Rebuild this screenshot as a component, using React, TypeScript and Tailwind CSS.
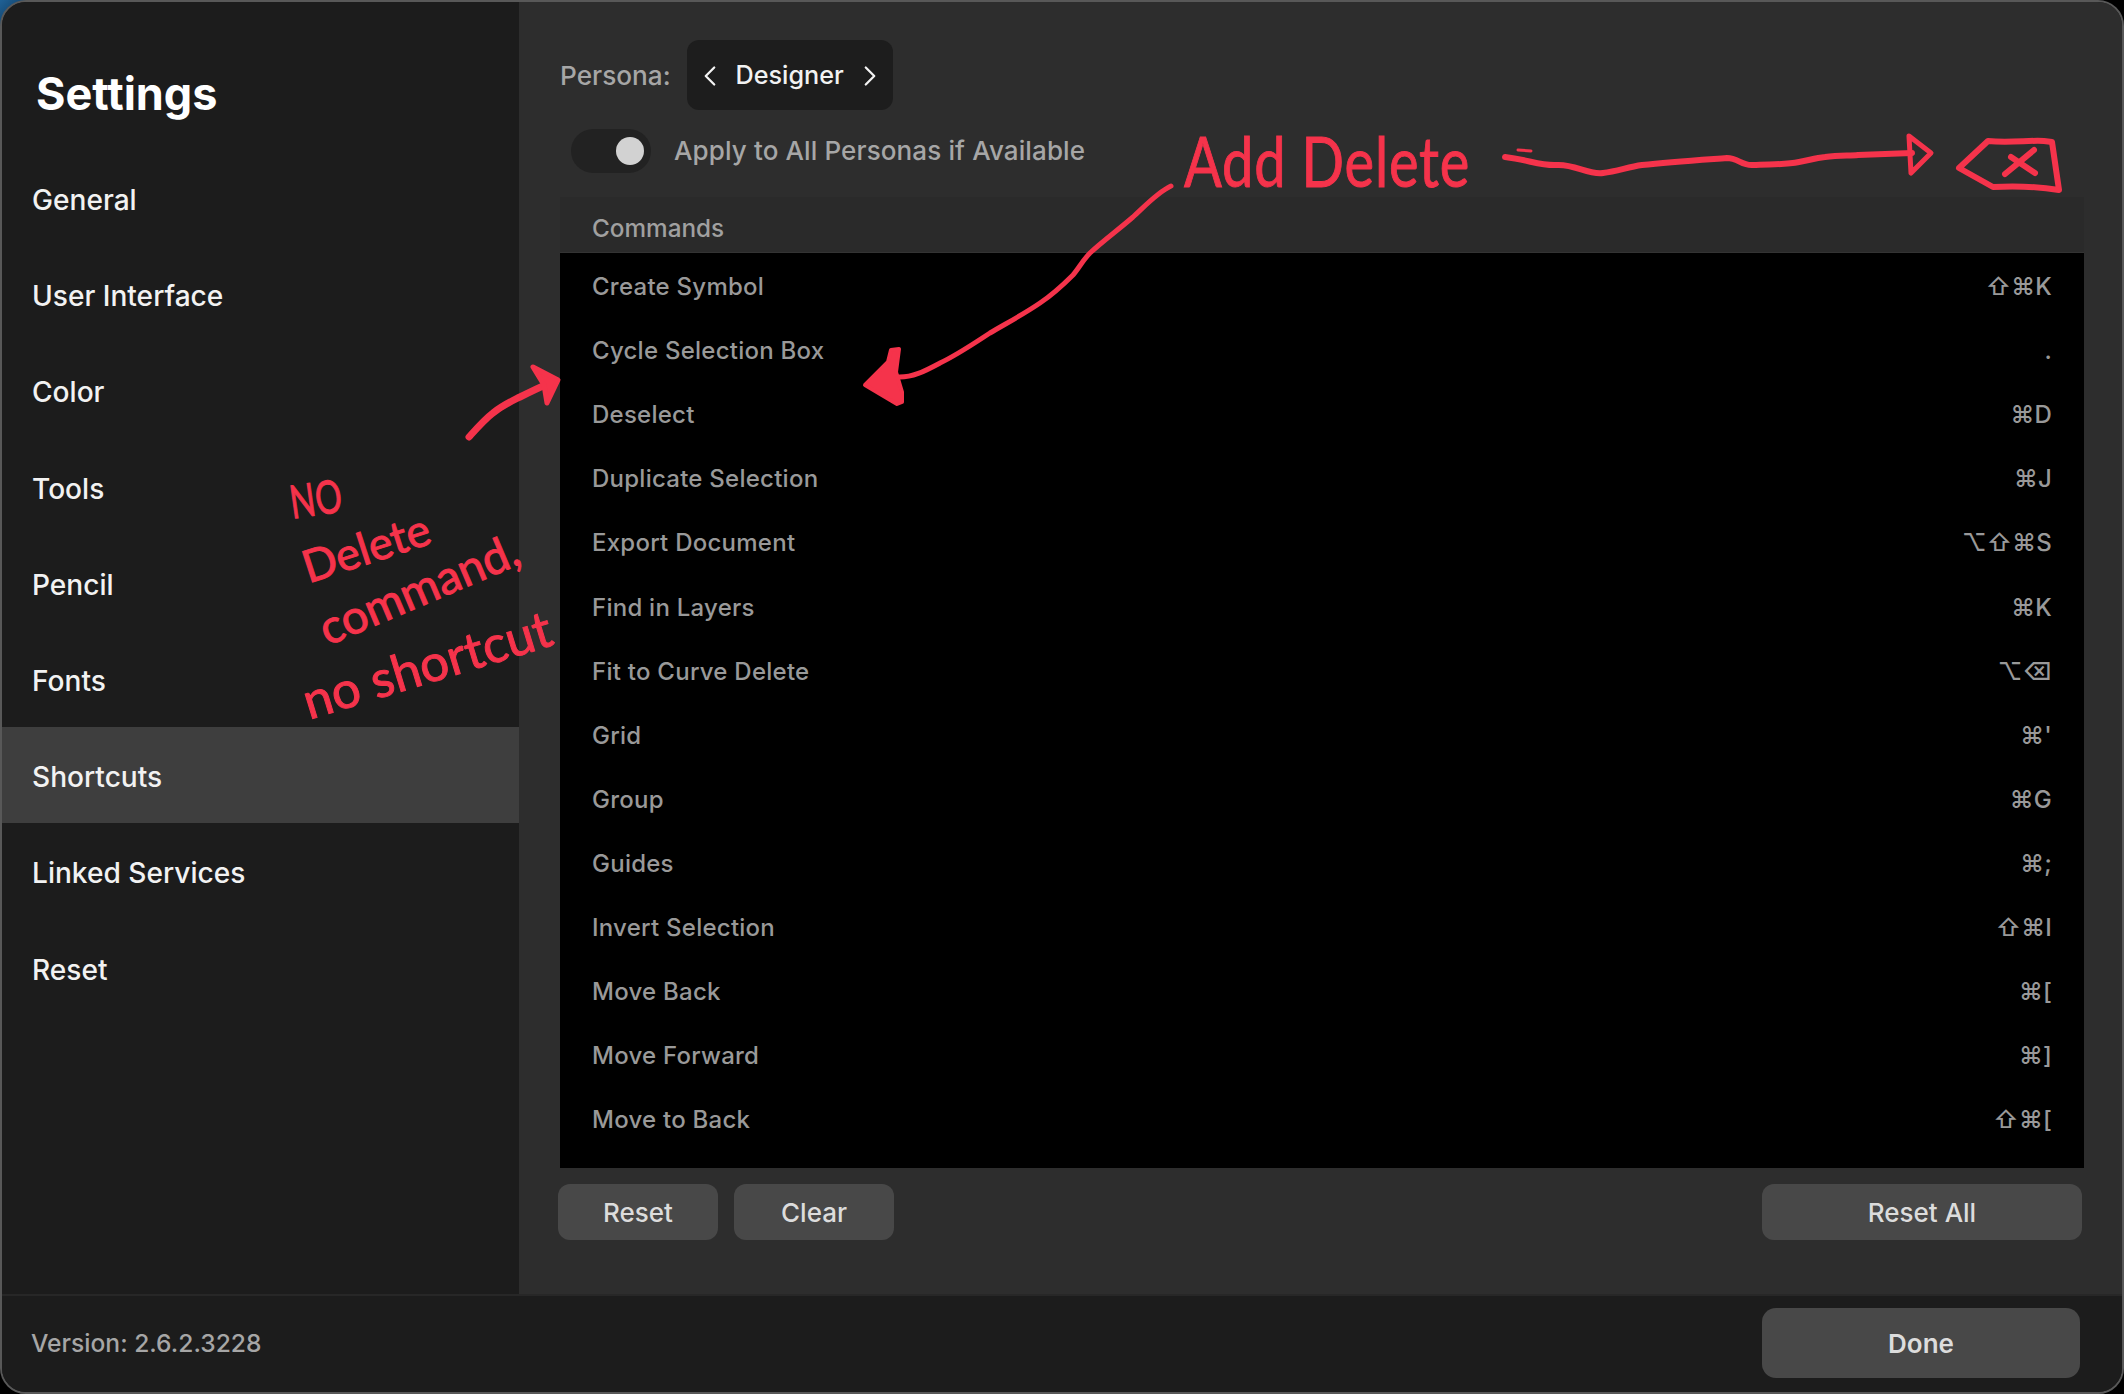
import { ChevronLeft, ChevronRight } from "lucide-react";

const sections = [
  "General",
  "User Interface",
  "Color",
  "Tools",
  "Pencil",
  "Fonts",
  "Shortcuts",
  "Linked Services",
  "Reset",
];

const commands = [
  ["Create Symbol", "⇧⌘K"],
  ["Cycle Selection Box", "."],
  ["Deselect", "⌘D"],
  ["Duplicate Selection", "⌘J"],
  ["Export Document", "⌥⇧⌘S"],
  ["Find in Layers", "⌘K"],
  ["Fit to Curve Delete", "⌥⌫"],
  ["Grid", "⌘'"],
  ["Group", "⌘G"],
  ["Guides", "⌘;"],
  ["Invert Selection", "⇧⌘I"],
  ["Move Back", "⌘["],
  ["Move Forward", "⌘]"],
  ["Move to Back", "⇧⌘["],
];

function Scribbles() {
  return (
    <svg
      className="absolute inset-0 pointer-events-none"
      width={2124}
      height={1394}
      viewBox="0 0 2124 1394"
      fill="none"
      stroke="#f5334b"
      strokeWidth={6}
      strokeLinecap="round"
      strokeLinejoin="round"
    >
      {/* wavy arrow to the delete key */}
      <path d="M1505 157C1530 160 1540 166 1557 165C1575 164 1588 175 1603 173C1618 171 1628 167 1642 165C1670 162 1700 160 1727 158C1738 158 1742 166 1753 165C1770 164 1785 165 1799 162C1810 160 1815 158 1825 157C1840 155 1850 156 1858 155L1912 153" />
      <path d="M1518 150L1531 151" strokeWidth={3} />
      <path d="M1909 136L1931 153L1911 173Z" strokeWidth={5} />
      {/* hand drawn delete key */}
      <path d="M1988 141C2010 143 2030 140 2044 141L2052 142L2059 190C2035 186 2015 186 1993 187L1959 168L1988 141Z" />
      <path d="M2034 150L2005 174M2011 157L2035 173" />
      {/* arrow to the list */}
      <path d="M1171 186C1158 192 1146 205 1133 217C1118 230 1103 241 1090 253C1083 260 1079 268 1073 275C1062 286 1052 295 1040 303C1024 314 1007 323 990 333C973 344 957 355 940 363C925 371 912 378 897 377" strokeWidth={5} />
      <path d="M865 385L888 362L891 350L899 349L896 372L902 392L902 402L897 404Z" fill="#f5334b" strokeWidth={4} />
      {/* small arrow from the note */}
      <path d="M469 437C478 427 485 419 493 413C503 405 512 401 520 397C530 392 538 388 552 382" strokeWidth={7} />
      <path d="M533 367L558 380L547 403L544 385Z" fill="#f5334b" strokeWidth={5} />
    </svg>
  );
}

function Notes() {
  const note =
    "absolute whitespace-nowrap text-[#f5334b] [font-family:Lato,sans-serif] [-webkit-text-stroke:1px_#f5334b]";
  return (
    <>
      <span className={`${note} left-[1184px] top-[116px] text-[70px] leading-[88px] tracking-[1px] scale-x-[0.8] origin-left`}>
        Add Delete
      </span>
      <span className={`${note} left-[290px] top-[477px] text-[46px] leading-[50px] -rotate-[8deg] scale-x-[0.72] origin-left`}>
        NO
      </span>
      <span className={`${note} left-[300px] top-[519px] text-[45px] leading-[56px] -rotate-[18deg]`}>
        Delete
      </span>
      <span className={`${note} left-[312px] top-[558px] text-[47px] leading-[60px] -rotate-[23deg]`}>
        command,
      </span>
      <span className={`${note} left-[298px] top-[634px] text-[51px] leading-[60px] -rotate-[17deg]`}>
        no shortcut
      </span>
    </>
  );
}

export default function App() {
  return (
    <div className="relative h-[1394px] w-[2124px] overflow-hidden bg-[linear-gradient(135deg,#1f6196_0,#0f3a5e_28px,#000000_30px)] [font-family:Inter,'DejaVu_Sans',sans-serif]">
      <div className="flex h-full flex-col overflow-hidden rounded-[26px] border-2 border-[#585858] bg-[#1c1c1c]">
        <div className="flex min-h-0 flex-1">
          <aside className="w-[517px] shrink-0 bg-[#1c1c1c]">
            <h1 className="mt-[62px] mb-[26px] pl-[34px] text-[45px] leading-[60px] font-bold text-white">
              Settings
            </h1>
            <nav>
              {sections.map((name) => (
                <div
                  key={name}
                  className={`flex h-[96.2px] items-center pt-[4px] pl-[30px] text-[28.1px] font-medium text-[#f2f2f2] ${
                    name === "Shortcuts" ? "bg-[#3e3e3e]" : ""
                  }`}
                >
                  {name}
                </div>
              ))}
            </nav>
          </aside>

          <main className="min-w-0 flex-1 bg-[#2d2d2d] pt-[38px] pr-[38px] pl-[41px]">
            <div className="flex h-[70px] items-center gap-[16px]">
              <span className="pt-[2px] text-[26.2px] font-medium text-[#a6a6a6]">
                Persona:
              </span>
              <div className="flex h-[70px] w-[206px] items-center justify-center gap-[9px] rounded-[12px] bg-[#1d1d1d] pt-[2px] text-[25.2px] font-medium text-[#f2f2f2]">
                <ChevronLeft size={34} strokeWidth={1.6} />
                Designer
                <ChevronRight size={34} strokeWidth={1.6} />
              </div>
            </div>

            <div className="mt-[19px] ml-[11px] flex h-[44px] items-center gap-[23px]">
              <div className="flex h-[44px] w-[80px] items-center justify-end rounded-full bg-[#222222] pr-[7px]">
                <div className="h-[28px] w-[28px] rounded-full bg-[#d2d2d2]" />
              </div>
              <span className="pb-[2px] text-[26px] font-medium tracking-[0.12px] text-[#a6a6a6]">
                Apply to All Personas if Available
              </span>
            </div>

            <div className="mt-[24px]">
              <div className="flex h-[56px] items-center border-b border-[#333333] bg-[#2a2a2a] pt-[8px] pl-[32px] text-[24.3px] font-medium text-[#a0a0a0]">
                Commands
              </div>
              <div className="h-[915px] overflow-hidden bg-black pt-[2px]">
                {commands.map(([label, keys]) => (
                  <div
                    key={label}
                    className="flex h-[64.1px] items-center justify-between px-[32px] text-[24px] font-medium tracking-[0.25px] text-[#999999]"
                  >
                    <span>{label}</span>
                    <span>{keys}</span>
                  </div>
                ))}
              </div>
            </div>

            <div className="mt-[16px] mr-[2px] -ml-[2px] flex h-[56px] items-stretch text-[26px] font-medium text-[#dcdcdc]">
              <button className="w-[160px] rounded-[12px] bg-[#484848]">Reset</button>
              <button className="ml-[16px] w-[160px] rounded-[12px] bg-[#484848]">Clear</button>
              <button className="ml-auto w-[320px] rounded-[12px] bg-[#484848]">Reset All</button>
            </div>
          </main>
        </div>

        <footer className="flex h-[98px] shrink-0 items-center justify-between border-t-2 border-[#272727] bg-[#1c1c1c] pr-[42px] pb-[2px] pl-[29px]">
          <span className="text-[24.6px] font-medium text-[#a6a6a6]">
            Version: 2.6.2.3228
          </span>
          <button className="h-[70px] w-[318px] rounded-[14px] bg-[#484848] text-[26px] font-semibold text-[#dcdcdc]">
            Done
          </button>
        </footer>
      </div>
      <Scribbles />
      <Notes />
    </div>
  );
}
